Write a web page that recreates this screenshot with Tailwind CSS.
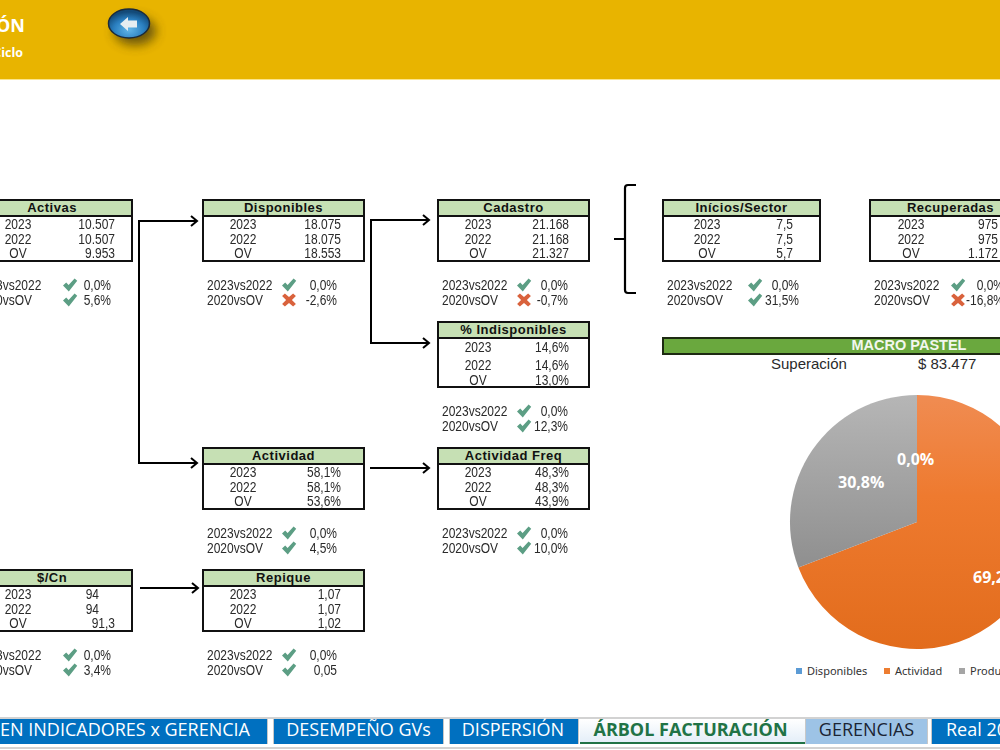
<!DOCTYPE html>
<html lang="es">
<head>
  <meta charset="UTF-8" />
  <title>Árbol Facturación</title>
  <script src="https://cdn.jsdelivr.net/npm/@tailwindcss/browser@4"></script>
</head>
<body class="bg-white">
<div class="w-[1000px] h-[750px] overflow-hidden flex flex-col font-['Liberation_Sans',sans-serif] text-[#2a2a2a]">

  <!-- cabecera -->
  <header class="h-[80px] shrink-0 bg-[#e8b400] border-b border-[#fbe58c] relative">
    <div class="absolute right-[975px] top-[13px] w-[300px] text-right text-white font-bold font-['Open_Sans',sans-serif]">
      <p class="text-[18px] leading-[24px] whitespace-nowrap">ÁRBOL FACTURACIÓN</p>
      <p class="text-[12.5px] leading-[16px] mt-[8px] pr-[2px]">Ciclo</p>
    </div>
    <svg class="absolute left-[100px] top-0 w-[80px] h-[60px]" viewBox="100 0 80 60">
      <defs>
        <radialGradient id="bola" cx="50%" cy="72%" r="62%">
          <stop offset="0" stop-color="#62b6e8" />
          <stop offset="0.6" stop-color="#2a7fc0" />
          <stop offset="1" stop-color="#134a78" />
        </radialGradient>
        <filter id="sombra" x="-60%" y="-60%" width="220%" height="220%"><feGaussianBlur stdDeviation="5.5" /></filter>
      </defs>
      <ellipse cx="135" cy="31" rx="21" ry="14" fill="#4a3c0c" opacity="0.8" filter="url(#sombra)" />
      <ellipse cx="129" cy="23.5" rx="20.5" ry="14.5" fill="url(#bola)" stroke="#1c2b3a" stroke-width="1.5" />
      <path d="M120 24 L128 17 V20.5 H137 V27.5 H128 V31 Z" fill="#e6edf1" />
    </svg>
  </header>

  <!-- arbol -->
  <main class="relative flex-1">
    <svg class="absolute inset-0 w-[1000px] h-[637px]" viewBox="0 80 1000 637" fill="none" stroke="#000" stroke-width="2">
      <path d="M197 221 H139 V463 H197" />
      <path d="M191 216 L197 221 L191 226 M191 458 L197 463 L191 468" />
      <path d="M429 220 H371 V343 H429" />
      <path d="M423 215 L429 220 L423 225 M423 338 L429 343 L423 348" />
      <path d="M370 468 H429 M423 463 L429 468 L423 473" />
      <path d="M140 588 H198 M192 583 L198 588 L192 593" />
      <path d="M636 185 H628 Q625 185 625 188 V290 Q625 293 628 293 H636 M614 239 H625" stroke-width="2.2" />
    </svg>

    <div id="nodos"></div>

    <!-- macro pastel -->
    <div class="absolute left-[662px] top-[257px] w-[494px] h-[18px] bg-[#6aa83e] border-2 border-[#1d2a12] text-[#f2f7ee] font-bold text-[14.5px] leading-[13px] text-center">MACRO PASTEL</div>
    <p class="absolute left-[771px] top-[275px] text-[15px] leading-[18px]">Superación</p>
    <p class="absolute left-[918px] top-[275px] text-[15px] leading-[18px]">$ 83.477</p>

    <svg class="absolute left-[780px] top-[305px] w-[280px] h-[270px] font-['Open_Sans',sans-serif]" viewBox="780 385 280 270">
      <defs>
        <linearGradient id="naranja" x1="0" y1="0" x2="0" y2="1">
          <stop offset="0" stop-color="#f08c52" />
          <stop offset="0.4" stop-color="#ee7a2f" />
          <stop offset="1" stop-color="#e26c1c" />
        </linearGradient>
        <linearGradient id="gris" x1="0" y1="0" x2="0" y2="1">
          <stop offset="0" stop-color="#b6b6b6" />
          <stop offset="1" stop-color="#8f8f8f" />
        </linearGradient>
      </defs>
      <path d="M917 522 L917 395 A127 127 0 1 1 798.4 567.5 Z" fill="url(#naranja)" />
      <path d="M917 522 L798.4 567.5 A127 127 0 0 1 917 395 Z" fill="url(#gris)" />
      <g fill="#fff" font-size="16" font-weight="700">
        <text x="897" y="465">0,0%</text>
        <text x="838" y="488">30,8%</text>
        <text x="973" y="583">69,2%</text>
      </g>
    </svg>

    <div class="absolute left-[796px] top-[584px] flex items-center text-[11px] leading-[14px] text-[#333] whitespace-nowrap font-['Noto_Sans',sans-serif]">
      <span class="w-[6px] h-[6px] bg-[#5b9bd5] mr-[5px]"></span><span class="w-[77px]">Disponibles</span>
      <span class="w-[6px] h-[6px] bg-[#ed7d31] mr-[5px]"></span><span class="w-[64px]">Actividad</span>
      <span class="w-[6px] h-[6px] bg-[#a5a5a5] mr-[5px]"></span><span>Productividad</span>
    </div>
  </main>

  <!-- pestañas -->
  <nav class="h-[32px] mb-[1px] shrink-0 border-y-2 border-[#d2d2d2] flex items-start justify-end text-[18px] leading-[20px] text-white whitespace-nowrap font-['Open_Sans',sans-serif]">
    <div class="w-[421px] shrink-0 h-[25px] mr-[5px] bg-[#0070c0] border-r border-[#c8c8c8] text-right pr-[17px]">RESUMEN INDICADORES x GERENCIA</div>
    <div class="w-[171px] shrink-0 h-[25px] mr-[5px] bg-[#0070c0] border-x border-[#c8c8c8] text-center">DESEMPEÑO GVs</div>
    <div class="w-[130px] shrink-0 h-[25px] mr-[1px] bg-[#0070c0] border-x border-[#c8c8c8] text-center pr-[2px]">DISPERSIÓN</div>
    <div class="w-[225px] shrink-0 h-[25px] bg-gradient-to-b from-white to-[#e4eef8] border-b-2 border-[#217346] text-center pr-[4px] font-bold text-[#217346]">ÁRBOL FACTURACIÓN</div>
    <div class="w-[123px] shrink-0 h-[25px] mr-[3px] bg-[#9dc3e6] border-x border-[#c8c8c8] text-center text-[#1a2433]">GERENCIAS</div>
    <div class="w-[200px] shrink-0 h-[25px] bg-[#0070c0] border-l border-[#c8c8c8] pl-[14px] mr-[-131px]">Real 2023</div>
  </nav>
</div>

<script>
  const ok = '<svg class="w-[16px] h-[14px] mx-auto" viewBox="0 0 16 14"><path d="M1 7.5 L4.2 4.6 L6.6 7 L12.6 .6 L15.2 2.8 L6.8 13.4 Z" fill="#5c9e84" /></svg>';
  const mal = '<svg class="w-[16px] h-[14px] mx-auto" viewBox="0 0 15 14"><path d="M.6 3 L3.4 .4 L7.5 3.9 L11.6 .4 L14.4 3 L10.4 7 L14.4 11 L11.6 13.6 L7.5 10.1 L3.4 13.6 L.6 11 L4.6 7 Z" fill="#d9623c" /></svg>';

  const nodos = [
    { pos: 'left-[-29px] top-[119px] w-[162px]', titulo: 'Activas', filas: 'grid-cols-[90px_52px]', comp: 'grid-cols-[86px_16px_33px]',
      v: ['10.507', '10.507', '9.953'], c: [[ok, '0,0%'], [ok, '5,6%']] },
    { pos: 'left-[202px] top-[119px] w-[163px]', titulo: 'Disponibles', filas: 'grid-cols-[78px_59px]', comp: 'grid-cols-[74px_16px_40px]',
      v: ['18.075', '18.075', '18.553'], c: [[ok, '0,0%'], [mal, '-2,6%']] },
    { pos: 'left-[437px] top-[119px] w-[153px]', titulo: 'Cadastro', filas: 'grid-cols-[78px_52px]', comp: 'grid-cols-[74px_16px_36px]',
      v: ['21.168', '21.168', '21.327'], c: [[ok, '0,0%'], [mal, '-0,7%']] },
    { pos: 'left-[662px] top-[119px] w-[159px]', titulo: 'Inícios/Sector', filas: 'grid-cols-[86px_43px]', comp: 'grid-cols-[80px_16px_36px]',
      v: ['7,5', '7,5', '5,7'], c: [[ok, '0,0%'], [ok, '31,5%']] },
    { pos: 'left-[869px] top-[119px] w-[163px]', titulo: 'Recuperadas', filas: 'grid-cols-[80px_47px]', comp: 'grid-cols-[76px_16px_38px]',
      v: ['975', '975', '1.172'], c: [[ok, '0,0%'], [mal, '-16,8%']] },
    { pos: 'left-[437px] top-[241px] w-[153px]', titulo: '% Indisponibles', filas: 'grid-cols-[78px_52px]', comp: 'grid-cols-[74px_16px_36px]', alto: ['h-[16px]', 'h-[20px]', 'h-[11px]'],
      v: ['14,6%', '14,6%', '13,0%'], c: [[ok, '0,0%'], [ok, '12,3%']] },
    { pos: 'left-[202px] top-[367px] w-[163px]', titulo: 'Actividad', filas: 'grid-cols-[78px_59px]', comp: 'grid-cols-[74px_16px_40px]',
      v: ['58,1%', '58,1%', '53,6%'], c: [[ok, '0,0%'], [ok, '4,5%']] },
    { pos: 'left-[437px] top-[367px] w-[153px]', titulo: 'Actividad Freq', filas: 'grid-cols-[78px_52px]', comp: 'grid-cols-[74px_16px_36px]',
      v: ['48,3%', '48,3%', '43,9%'], c: [[ok, '0,0%'], [ok, '10,0%']] },
    { pos: 'left-[-29px] top-[489px] w-[162px]', titulo: '$/Cn', filas: 'grid-cols-[90px_52px]', comp: 'grid-cols-[86px_16px_33px]', pad: ['pr-[16px]', 'pr-[16px]', ''],
      v: ['94', '94', '91,3'], c: [[ok, '0,0%'], [ok, '3,4%']] },
    { pos: 'left-[202px] top-[489px] w-[163px]', titulo: 'Repique', filas: 'grid-cols-[78px_59px]', comp: 'grid-cols-[74px_16px_40px]',
      v: ['1,07', '1,07', '1,02'], c: [[ok, '0,0%'], [ok, '0,05']] },
  ];
  const altoBase = ['h-[15px]', 'h-[15px]', 'h-[13px]'];
  const etiquetas = ['2023', '2022', 'OV'];
  const lineas = ['2023vs2022', '2020vsOV'];

  document.getElementById('nodos').innerHTML = nodos.map(n => `
    <section class="absolute ${n.pos}">
      <div class="border-2 border-[#111] text-[12px]">
        <h3 class="h-[16px] bg-[#c6e0b4] border-b-2 border-[#111] text-center font-bold text-[13px] leading-[14px] tracking-[0.5px] text-[#111]">${n.titulo}</h3>
        ${n.v.map((v, i) => `
        <div class="grid ${n.filas} ${(n.alto || altoBase)[i]} items-center leading-[11px]">
          <span class="text-center scale-y-[1.15]">${etiquetas[i]}</span>
          <span class="text-right scale-y-[1.15] ${n.pad ? n.pad[i] : ''}">${v}</span>
        </div>`).join('')}
      </div>
      <div class="mt-[15px] pl-[5px] text-[12px] leading-[12px]">
        ${n.c.map((c, i) => `
        <div class="grid ${n.comp} h-[15px] items-center whitespace-nowrap">
          <span class="scale-y-[1.15]">${lineas[i]}</span>
          ${c[0]}
          <span class="text-right scale-y-[1.15]">${c[1]}</span>
        </div>`).join('')}
      </div>
    </section>`).join('');
</script>
</body>
</html>
